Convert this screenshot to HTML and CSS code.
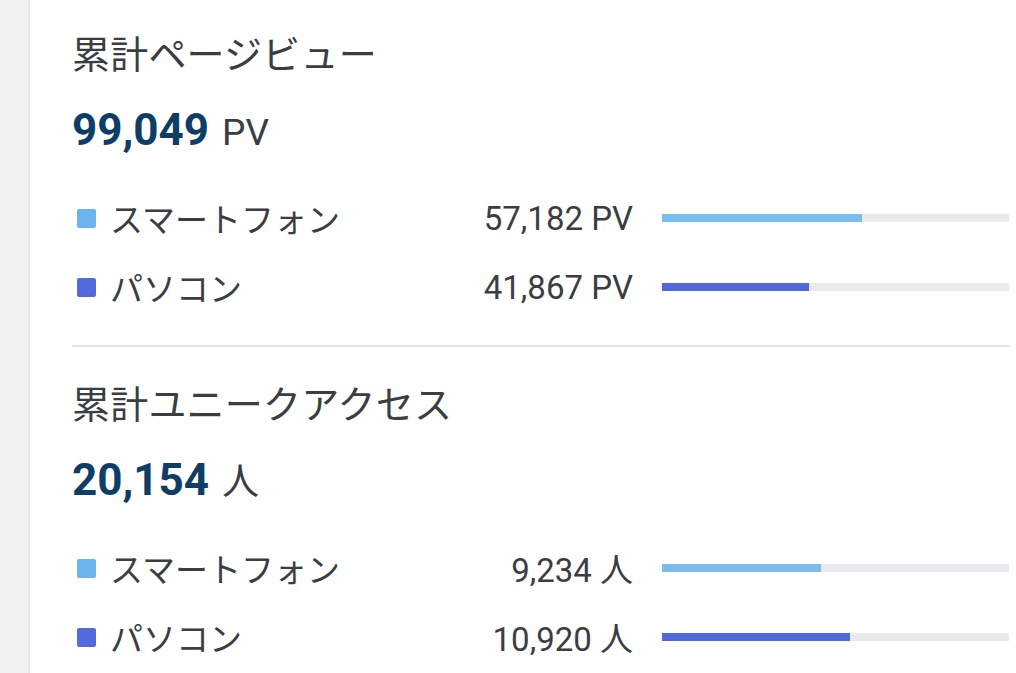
FILE: index.html
```html
<!DOCTYPE html>
<html lang="ja">
<head>
<meta charset="utf-8">
<title>累計アクセス</title>
<link rel="stylesheet" href="styles.css">
</head>
<body>
<div class="page">
  <aside class="sidebar"></aside>
  <main class="main">
    <section class="section">
      <h2 class="title">累計ページビュー</h2>
      <div class="total"><span class="total-num">99,049</span><span class="total-unit">PV</span></div>
      <ul class="rows">
        <li class="row">
          <span class="marker marker-sp"></span>
          <span class="label">スマートフォン</span>
          <span class="value">57,182 PV</span>
          <span class="track"><span class="fill fill-sp" style="width:57.73%"></span></span>
        </li>
        <li class="row">
          <span class="marker marker-pc"></span>
          <span class="label">パソコン</span>
          <span class="value">41,867 PV</span>
          <span class="track"><span class="fill fill-pc" style="width:42.27%"></span></span>
        </li>
      </ul>
    </section>
    <section class="section section-divided">
      <h2 class="title">累計ユニークアクセス</h2>
      <div class="total"><span class="total-num">20,154</span><span class="total-unit">人</span></div>
      <ul class="rows">
        <li class="row">
          <span class="marker marker-sp"></span>
          <span class="label">スマートフォン</span>
          <span class="value">9,234 人</span>
          <span class="track"><span class="fill fill-sp" style="width:45.82%"></span></span>
        </li>
        <li class="row">
          <span class="marker marker-pc"></span>
          <span class="label">パソコン</span>
          <span class="value">10,920 人</span>
          <span class="track"><span class="fill fill-pc" style="width:54.18%"></span></span>
        </li>
      </ul>
    </section>
  </main>
</div>
</body>
</html>
```
FILE: styles.css
```css
* { box-sizing: border-box; }
html, body {
  margin: 0;
  padding: 0;
  background: #ffffff;
  height: 100%;
  overflow: hidden;
}
body {
  font-family: Roboto, "Noto Sans CJK JP", sans-serif;
  color: #3a3d42;
}
.page {
  display: flex;
  min-height: 100%;
}
.sidebar {
  width: 30px;
  flex: 0 0 30px;
  background: #f1f2f4;
  border-right: 2px solid #e4e6e9;
}
.main {
  flex: 1;
  padding: 0 7px 0 42px;
}
.section {
  padding: 32px 0 35px;
}
.section:first-child {
  padding-top: 29px;
}
.section-divided {
  border-top: 2px solid #e3e4e6;
}
.title {
  margin: 0;
  font-size: 38px;
  font-weight: 400;
  line-height: 52px;
  height: 52px;
  color: #3a3d42;
  letter-spacing: 0.2px;
}
.total {
  margin-top: 21px;
  height: 56px;
  line-height: 56px;
  display: flex;
  align-items: baseline;
}
.total-num {
  font-size: 44px;
  font-weight: 700;
  color: #0e3d66;
}
.total-unit {
  font-size: 37px;
  margin-left: 13px;
  color: #3a3d42;
}
.rows {
  list-style: none;
  margin: 37px 0 0;
  padding: 0;
  display: flex;
  flex-direction: column;
  gap: 23px;
}
.row {
  display: flex;
  align-items: center;
  height: 46px;
  padding-left: 5px;
}
.marker {
  width: 19px;
  height: 19px;
  border-radius: 2px;
  flex: 0 0 19px;
}
.marker-sp { background: #6db3ee; }
.marker-pc { background: #536bda; }
.label {
  margin-left: 14px;
  font-size: 33px;
  flex: 1;
  color: #3a3d42;
}
.value {
  font-size: 33px;
  text-align: right;
  color: #3a3d42;
  white-space: nowrap;
}
.track {
  width: 347px;
  flex: 0 0 347px;
  height: 8px;
  margin-left: 29px;
  background: #e8eaed;
  display: flex;
}
.fill { height: 100%; display: block; }
.fill-sp { background: #7bbcef; }
.fill-pc { background: #5169d8; }
```
